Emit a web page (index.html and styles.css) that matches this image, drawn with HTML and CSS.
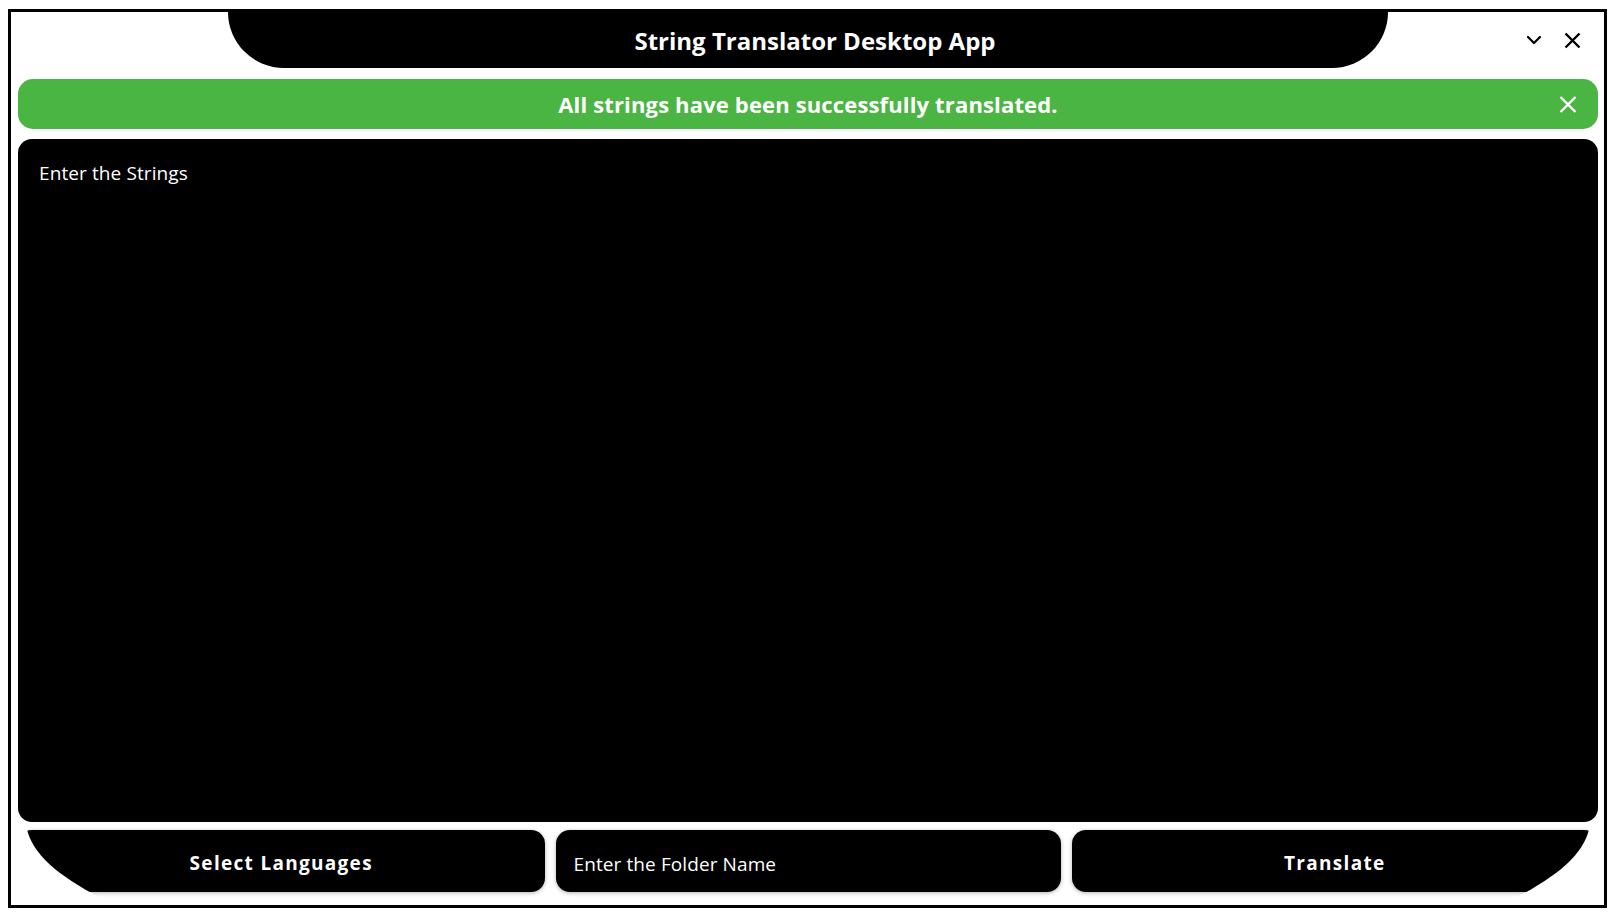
FILE: index.html
```html
<!DOCTYPE html>
<html lang="en">
<head>
<meta charset="utf-8">
<title>String Translator Desktop App</title>
<link rel="stylesheet" href="styles.css">
</head>
<body>
<div class="window">
  <header class="header-row">
    <div class="header-spacer"></div>
    <div class="titlebar"><h1 class="title">String Translator Desktop App</h1></div>
    <div class="controls">
      <button class="ctrl" aria-label="Minimize">
        <svg width="14" height="8" viewBox="0 0 14 8"><path d="M1 1 L7 7 L13 1" fill="none" stroke="#000" stroke-width="2.2" stroke-linecap="square"/></svg>
      </button>
      <button class="ctrl" aria-label="Close">
        <svg width="17" height="17" viewBox="0 0 17 17"><path d="M1.5 1.5 L15.5 15.5 M15.5 1.5 L1.5 15.5" fill="none" stroke="#000" stroke-width="2.4"/></svg>
      </button>
    </div>
  </header>

  <div class="banner">
    <div class="banner-spacer"></div>
    <p class="banner-text">All strings have been successfully translated.</p>
    <button class="banner-close" aria-label="Dismiss">
      <svg width="18" height="17" viewBox="0 0 18 17"><path d="M1.5 1 L16.5 16 M16.5 1 L1.5 16" fill="none" stroke="#fff" stroke-width="2.4"/></svg>
    </button>
  </div>

  <div class="editor">
    <div class="placeholder">Enter the Strings</div>
  </div>

  <div class="actions">
    <button class="action-btn">Select Languages</button>
    <div class="folder-input">Enter the Folder Name</div>
    <button class="action-btn">Translate</button>
  </div>
</div>
</body>
</html>
```

FILE: styles.css
```css
* {
  box-sizing: border-box;
}

html, body {
  margin: 0;
  padding: 0;
  background: #fff;
}

body {
  font-family: "Open Sans", "Noto Sans", "DejaVu Sans", sans-serif;
}

.window {
  margin: 9px 5px 7px 8px;
  width: 1599px;
  height: 899px;
  border: 3px solid #000;
  padding: 0 6px 13px 7px;
  display: flex;
  flex-direction: column;
  background: #fff;
}

.header-row {
  height: 56px;
  flex: none;
  display: grid;
  grid-template-columns: 1fr 1160px 1fr;
}

.titlebar {
  background: #000;
  border-radius: 0 0 58px 58px;
  display: flex;
  align-items: center;
  justify-content: center;
  padding: 2px 0 0 14px;
}

.title {
  margin: 0;
  color: #fff;
  font-size: 24px;
  font-weight: 700;
  letter-spacing: 0;
  line-height: 1;
}

.controls {
  display: flex;
  align-items: center;
  justify-content: flex-end;
  gap: 23px;
  padding-right: 17px;
}

.ctrl,
.banner-close {
  background: none;
  border: 0;
  padding: 0;
  margin: 0;
  display: flex;
  cursor: pointer;
}

.banner {
  margin-top: 11px;
  height: 50px;
  flex: none;
  background: #4bb543;
  border-radius: 15px;
  display: grid;
  grid-template-columns: 1fr auto 1fr;
  align-items: center;
}

.banner-text {
  margin: 0;
  color: #fff;
  font-size: 22px;
  font-weight: 700;
  letter-spacing: 0.15px;
}

.banner-close {
  justify-self: end;
  margin-right: 21px;
}

.editor {
  margin-top: 10px;
  flex: 1;
  background: #000;
  border-radius: 14px;
  padding: 20px 21px;
}

.placeholder {
  color: #fff;
  font-size: 19px;
  letter-spacing: 0.1px;
  line-height: 28px;
}

.actions {
  margin-top: 8px;
  height: 62px;
  flex: none;
  display: grid;
  grid-template-columns: 1fr 505px 1fr;
  gap: 11px;
  clip-path: ellipse(782px 182px at 50% -10px);
}

.action-btn,
.folder-input {
  background: #000;
  color: #fff;
  border: 0;
  border-radius: 14px;
  box-shadow: 0 1px 4px rgba(0, 0, 0, 0.3);
  font-family: inherit;
}

.action-btn {
  font-size: 19px;
  font-weight: 700;
  letter-spacing: 1.3px;
  padding: 3px 0 0;
  cursor: pointer;
}

.folder-input {
  display: flex;
  align-items: center;
  padding: 6px 18px 0;
  font-size: 19px;
  letter-spacing: 0.1px;
}
```
